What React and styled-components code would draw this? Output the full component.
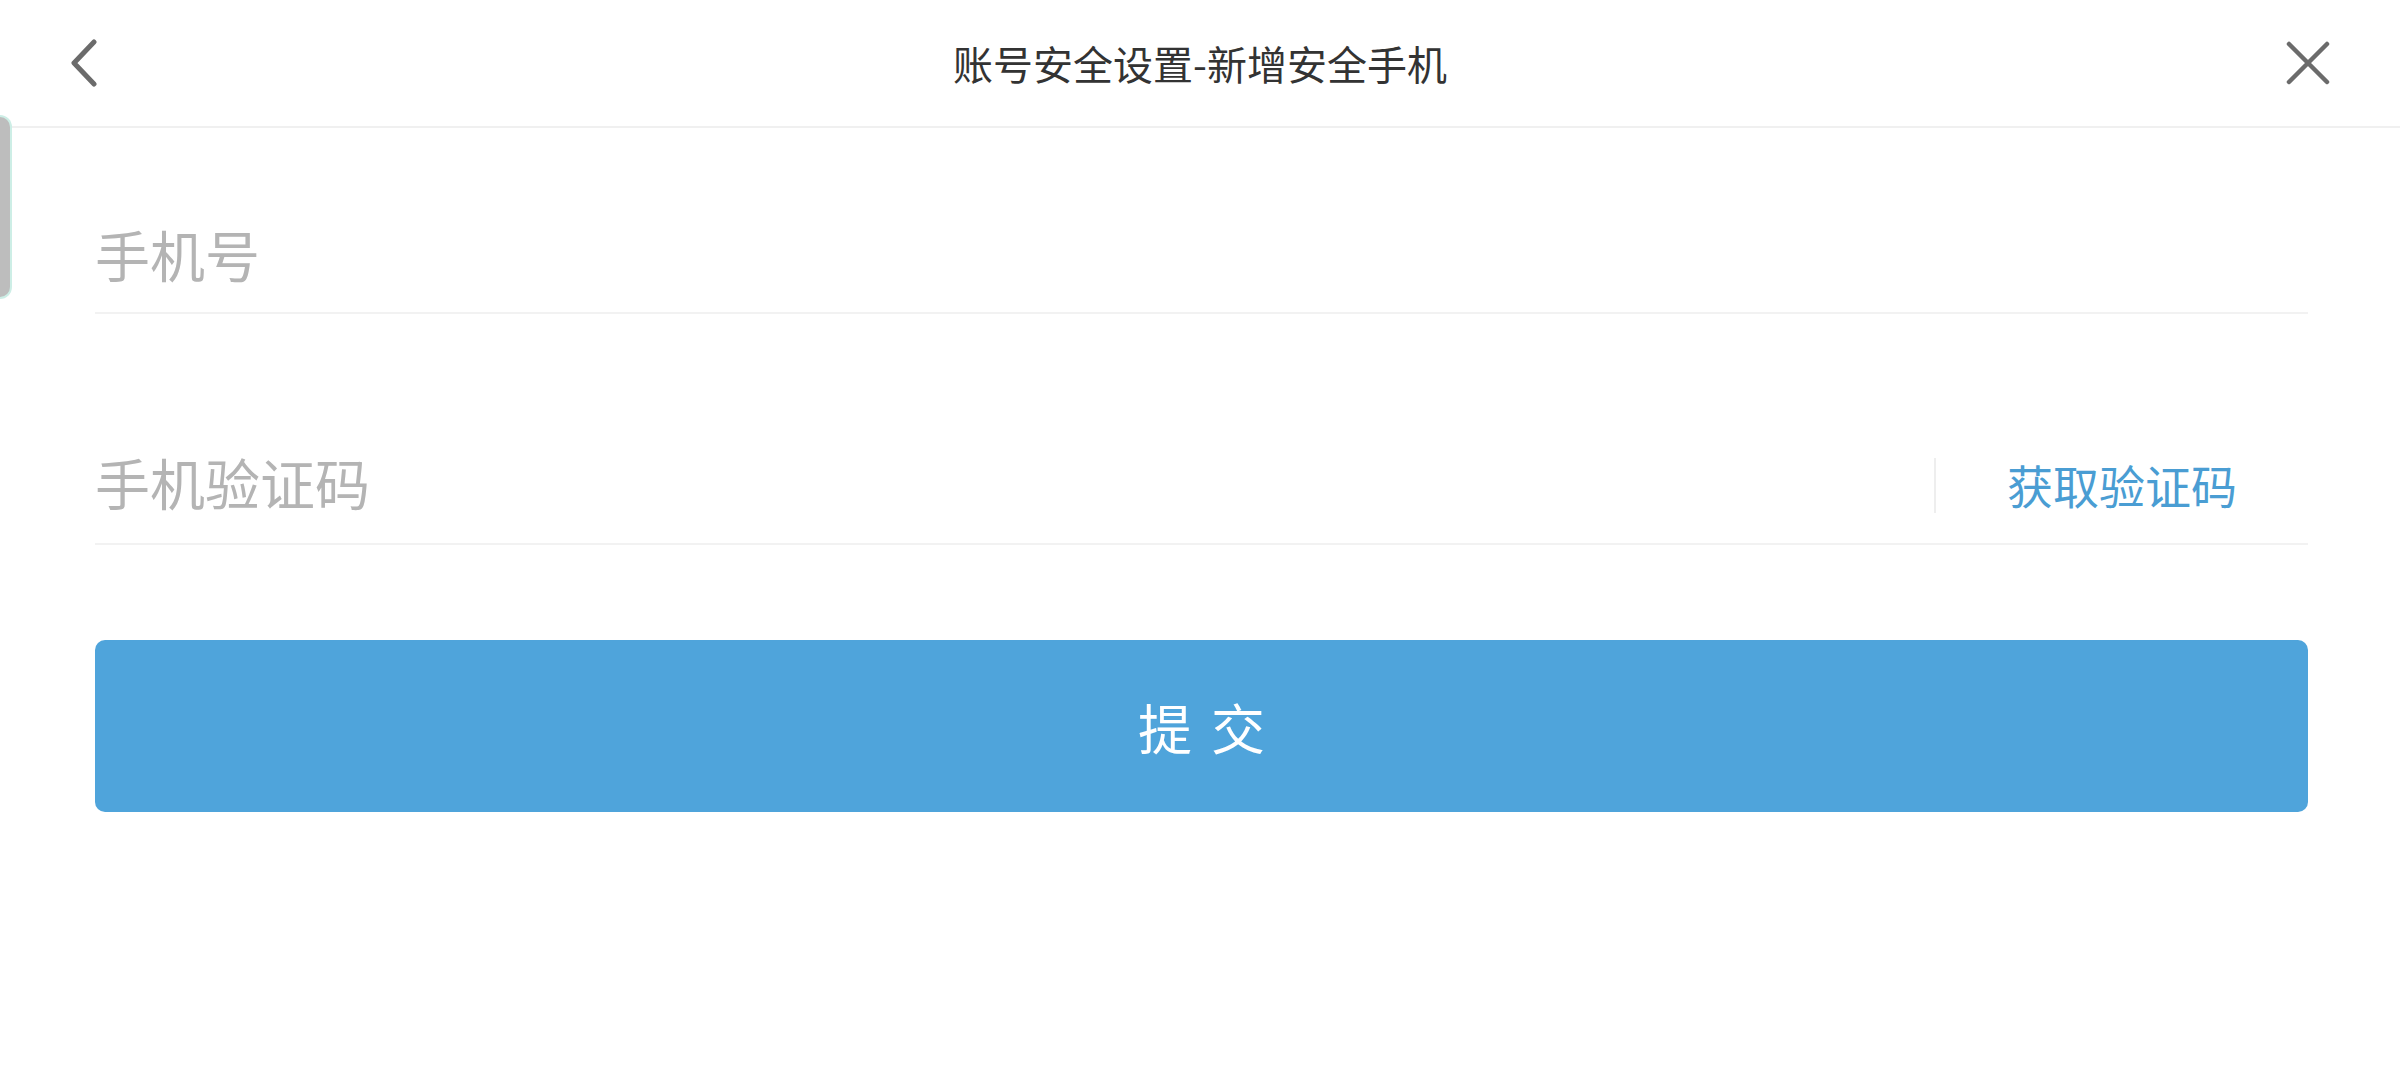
import styled, { createGlobalStyle } from "styled-components";

const GlobalStyle = createGlobalStyle`
  html, body {
    margin: 0;
    padding: 0;
    background: #fff;
    font-family: "Noto Sans CJK SC", "Noto Sans", sans-serif;
  }
`;

const Page = styled.div`
  position: relative;
  width: 2400px;
  height: 1080px;
  background: #fff;
  overflow: hidden;
`;

// Header bar
const Header = styled.header`
  height: 126px;
  display: flex;
  align-items: center;
  justify-content: space-between;
  padding: 0 70px;
  border-bottom: 2px solid #f0f0f0;
`;

const IconButton = styled.button`
  width: 44px;
  height: 48px;
  padding: 0;
  border: none;
  background: none;
  display: flex;
  align-items: center;
  justify-content: ${(p) => p.$align || "center"};
  cursor: pointer;
  color: #6b6b6b;
`;

const Title = styled.h1`
  margin: 0;
  font-size: 40px;
  font-weight: 400;
  color: #333;
`;

// little tab stuck on the left edge
const SideTab = styled.div`
  position: absolute;
  left: 0;
  top: 115px;
  width: 10px;
  height: 180px;
  background: #bdbdbd;
  border: 2px solid #cdeee6;
  border-left: none;
  border-radius: 0 12px 12px 0;
`;

const Form = styled.form`
  padding: 0 92px 0 95px;
  display: flex;
  flex-direction: column;
`;

const Field = styled.div`
  height: 110px;
  margin-top: ${(p) => p.$top}px;
  display: flex;
  align-items: center;
  border-bottom: 2px solid #f2f2f2;
`;

const Input = styled.input`
  flex: 1;
  height: 100%;
  box-sizing: border-box;
  border: none;
  outline: none;
  padding: 0 0 ${(p) => p.$lift || 10}px;
  background: transparent;
  font-family: inherit;
  font-size: 55px;
  color: #333;

  &::placeholder {
    color: #b4b4b4;
  }
`;

const Divider = styled.span`
  width: 2px;
  height: 55px;
  background: #eeeeee;
  margin-top: -6px;
`;

const CodeButton = styled.button`
  border: none;
  background: none;
  padding: 0 71px;
  font-family: inherit;
  font-size: 46px;
  color: #4a9dd3;
  cursor: pointer;
  margin-top: -8px;
`;

const SubmitButton = styled.button`
  margin-top: 95px;
  height: 172px;
  border: none;
  border-radius: 10px;
  background: #4fa4db;
  color: #fff;
  font-family: inherit;
  font-size: 54px;
  letter-spacing: 19px;
  text-indent: 19px;
  cursor: pointer;
`;

export default function App() {
  return (
    <>
      <GlobalStyle />
      <Page>
        <Header>
          <IconButton $align="flex-start" aria-label="返回">
            <svg width="28" height="48" viewBox="0 0 28 48" fill="none">
              <path
                d="M24 3 L4 24 L24 45"
                stroke="currentColor"
                strokeWidth="5"
                strokeLinecap="round"
                strokeLinejoin="round"
              />
            </svg>
          </IconButton>
          <Title>账号安全设置-新增安全手机</Title>
          <IconButton aria-label="关闭">
            <svg width="44" height="44" viewBox="0 0 44 44" fill="none">
              <path
                d="M3 3 L41 41 M41 3 L3 41"
                stroke="currentColor"
                strokeWidth="4.5"
                strokeLinecap="round"
              />
            </svg>
          </IconButton>
        </Header>
        <SideTab />
        <Form onSubmit={(e) => e.preventDefault()}>
          <Field $top={74}>
            <Input type="tel" placeholder="手机号" $lift={8} />
          </Field>
          <Field $top={119}>
            <Input type="text" placeholder="手机验证码" $lift={14} />
            <Divider />
            <CodeButton type="button">获取验证码</CodeButton>
          </Field>
          <SubmitButton type="submit">提交</SubmitButton>
        </Form>
      </Page>
    </>
  );
}
